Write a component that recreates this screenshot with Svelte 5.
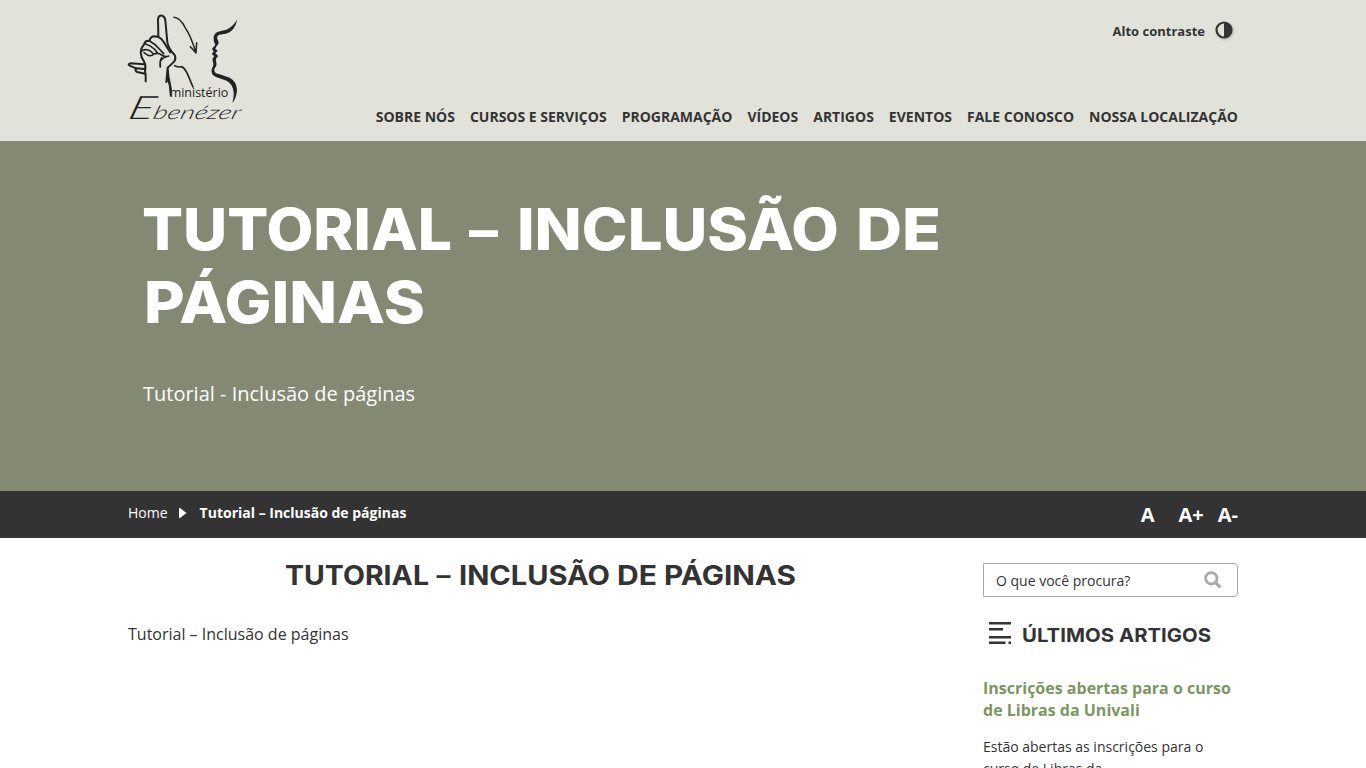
<script>
  const nav = ['Sobre nós', 'Cursos e serviços', 'Programação', 'Vídeos', 'Artigos', 'Eventos', 'Fale conosco', 'Nossa localização'];
  const hero = [
    { t: 'TUTORIAL', x: -1, y: 59, w: 310 },
    { t: '–', x: 326, y: 60, w: 29, dash: true },
    { t: 'INCLUSÃO', x: 374, y: 59, w: 322 },
    { t: 'DE', x: 713, y: 59, w: 85 },
    { t: 'PÁGINAS', x: 1, y: 132, w: 281 }
  ];
  const heading = [
    { t: 'TUTORIAL', x: 0, w: 144 },
    { t: '–', x: 151.5, w: 14, dash: true },
    { t: 'INCLUSÃO', x: 174, w: 151 },
    { t: 'DE', x: 332, w: 40 },
    { t: 'PÁGINAS', x: 379, w: 132 }
  ];
  const artigos = [
    { t: 'ÚLTIMOS', x: 0, w: 92 },
    { t: 'ARTIGOS', x: 97, w: 92 }
  ];
</script>

<header>
  <div class="wrap top">
    <svg class="logo" width="126" height="125" viewBox="24 0 378 375" aria-label="Ministério Ebenézer">
      <g fill="none" stroke="#222" stroke-width="6" stroke-linecap="round" stroke-linejoin="round">
        <path d="M115 94 L114 42 Q116 30 127 32 Q134 34 136 45 L142 112 Q146 132 164 150 Q169 160 163 169 Q151 181 143 188 L139 231 M143 188 L145 213 L153 254" />
        <path d="M77 229 Q78 211 75 198 Q79 184 72 169 Q63 157 62 142 Q63 128 72 118 Q76 105 89 108 Q90 94 105 94 Q120 95 129 108 L151 142" />
        <path d="M68 137 Q78 130 91 138 L101 147 Q95 155 84 151 L72 143 M76 117 Q91 121 103 132 L112 143 M89 108 Q104 116 118 132 L131 146 M101 147 Q115 142 125 150 Q135 158 146 153 M125 158 Q118 171 121 186 M146 153 Q128 157 121 169" stroke-width="5" />
        <path d="M73 178 L31 175 Q22 178 29 182 L48 190 L73 192 M48 190 Q44 197 51 201 L76 206" />
        <path d="M164 182 Q178 188 184 185 Q193 187 202 206 L219 246 M141 219 L149 241 L152 272" stroke-width="5" />
        <path d="M162 37 Q181 39 195 67 Q213 93 228 144 M211 125 L228 144 L230 113" stroke-width="4.500" />
      </g>
      <path d="M352 43 Q344 81 318 86 L298 89 Q288 93 293 104 Q300 115 290 123 L286 131 L293 137 L286 145 L295 153 Q286 160 288 169 Q293 182 284 190 Q277 204 299 208 L329 218 Q351 230 351 256 Q349 281 337 294 Q344 269 339 251 Q335 236 320 227 L290 217 Q269 209 276 190 Q283 180 278 169 Q276 159 283 154 L275 147 L281 140 L276 131 L286 119 Q279 108 281 96 Q283 83 300 79 L319 74 Q338 67 352 43Z" fill="#222" />
      <text x="149" y="276" class="small-name" textLength="176" lengthAdjust="spacingAndGlyphs">ministério</text>
      <g transform="translate(20 343) skewX(-16)">
        <text x="0" y="0" class="script-name" textLength="338" lengthAdjust="spacingAndGlyphs"><tspan font-size="96">E</tspan>benézer</text>
      </g>
    </svg>
    <div class="right">
      <a class="contrast" href="#contraste">Alto contraste
        <svg width="20" height="20" viewBox="0 0 20 20"><circle cx="10" cy="10" r="7.500" fill="#e1e3da" stroke="#333" stroke-width="2.200" /><path d="M10 2.500a7.500 7.500 0 0 1 0 15Z" fill="#333" /></svg>
      </a>
      <nav>{#each nav as item}<a href="#menu">{item}</a>{/each}</nav>
    </div>
  </div>
</header>

<section class="hero">
  <h1>
    <svg width="820" height="150">
      {#each hero as p}<text class:dash={p.dash} x={p.x} y={p.y} textLength={p.w} lengthAdjust="spacingAndGlyphs">{p.t}</text>{/each}
    </svg>
  </h1>
  <p>Tutorial - Inclusão de páginas</p>
</section>

<div class="crumbs">
  <div class="wrap bar">
    <a href="#home">Home</a>
    <svg class="arrow" width="8" height="12" viewBox="0 0 8 12"><path d="M0 1.500Q0 .5 1 1L7.500 6 1 11Q0 11.500 0 10.500Z" fill="#fff" /></svg>
    <strong>Tutorial – Inclusão de páginas</strong>
    <div class="sizes"><a href="#a">A</a><a href="#mais">A+</a><a href="#menos">A-</a></div>
  </div>
</div>

<div class="wrap content">
  <main>
    <h2>
      <svg width="512" height="34">
        {#each heading as p}<text class:dash={p.dash} x={p.x} y="27" textLength={p.w} lengthAdjust="spacingAndGlyphs">{p.t}</text>{/each}
      </svg>
    </h2>
    <p>Tutorial – Inclusão de páginas</p>
  </main>
  <aside>
    <div class="search">
      <span>O que você procura?</span>
      <svg width="18" height="18" viewBox="0 0 18 18" fill="none" stroke="#aaa"><circle cx="7.300" cy="7.300" r="5.700" stroke-width="2.800" /><path d="M11.500 11.500 16.300 16.300" stroke-width="3.200" /></svg>
    </div>
    <h3>
      <svg class="lines" width="23" height="24" viewBox="0 0 23 24" fill="#333"><path d="M0 0h22v2.500H0zM0 6h14v2.500H0zM0 14h22v2.500H0zM0 19.500h16.500V22H0zM19.500 19.500H22V22h-2.500z" /></svg>
      <svg width="192" height="28">
        {#each artigos as p}<text x={p.x} y="21" textLength={p.w} lengthAdjust="spacingAndGlyphs">{p.t}</text>{/each}
      </svg>
    </h3>
    <h4>Inscrições abertas para o curso de Libras da Univali</h4>
    <p>Estão abertas as inscrições para o curso de Libras da</p>
  </aside>
</div>

<style>
  :global(html), :global(body) { overflow: hidden; height: 768px; }
  :global(body) { margin: 0; background: #fff; color: #333; font-family: "Open Sans", sans-serif; }
  a { color: inherit; text-decoration: none; }
  svg { display: block; flex: none; }
  h1, h2, h3, h4, p { margin: 0; }
  .wrap { width: 1110px; margin: 0 auto; }
  header { background: #e1e3da; height: 141px; }
  .top { display: flex; justify-content: space-between; }
  .logo { margin-top: 5px; overflow: visible; }
  .small-name { font: 38px "Open Sans", sans-serif; fill: #222; }
  .script-name { font: italic 300 56px Lato, sans-serif; fill: #222; }
  .right { display: flex; flex-direction: column; align-items: flex-end; }
  .contrast { display: flex; align-items: center; gap: 9px; font-size: 13px; line-height: 20px; font-weight: 700; height: 20px; margin: 20px 4px 0 0; padding-top: 1px; }
  .contrast svg { filter: drop-shadow(1px 1px 1px #0003); margin-top: -2px; }
  nav { display: flex; gap: 15px; margin-top: 66px; font-size: 14px; line-height: 20px; font-weight: 700; text-transform: uppercase; white-space: nowrap; }
  .hero { height: 350px; background: #848973; color: #fff; box-sizing: border-box; padding: 50px 143px 0; }
  h1 { height: 150px; }
  h1 svg { overflow: visible; }
  h1 text { font: 800 58px Inter, sans-serif; fill: #fff; }
  .hero p { margin-top: 39px; font-size: 20px; line-height: 28px; }
  h1 text.dash { font-weight: 700; }
  .crumbs { height: 47px; background: #333; color: #fff; }
  .bar { display: flex; font-size: 14px; line-height: 20px; padding-top: 12px; }
  .arrow { margin: 4px 13px 0 11px; }
  .sizes { margin-left: auto; display: flex; font-size: 20px; line-height: 24px; font-weight: 700; }
  .sizes a + a { margin-left: 14px; }
  .sizes a:nth-child(2) { margin-left: 24px; }
  .content { display: flex; justify-content: space-between; }
  main { width: 825px; padding-top: 20px; }
  h2 { display: flex; justify-content: center; }
  h2 text { font: 700 27px Inter, sans-serif; fill: #333; }
  h2 text.dash { font-weight: 600; }
  main p { margin-top: 30px; font-size: 16px; line-height: 24px; }
  aside { width: 255px; padding-top: 25px; }
  .search { display: flex; justify-content: space-between; align-items: center; box-sizing: border-box; height: 34px; border: 1px solid #aaa; border-radius: 0 4px 4px 0; padding: 0 15px 0 12px; font-size: 14px; }
  h3 { display: flex; margin: 24px 0 0 6px; gap: 10px; }
  .lines { margin-top: 1px; }
  h3 text { font: 700 19px Inter, sans-serif; fill: #333; }
  h4 { margin-top: 28px; font-size: 16px; line-height: 22px; color: #7c965f; }
  aside p { margin-top: 15px; font-size: 14px; line-height: 22px; }
</style>
